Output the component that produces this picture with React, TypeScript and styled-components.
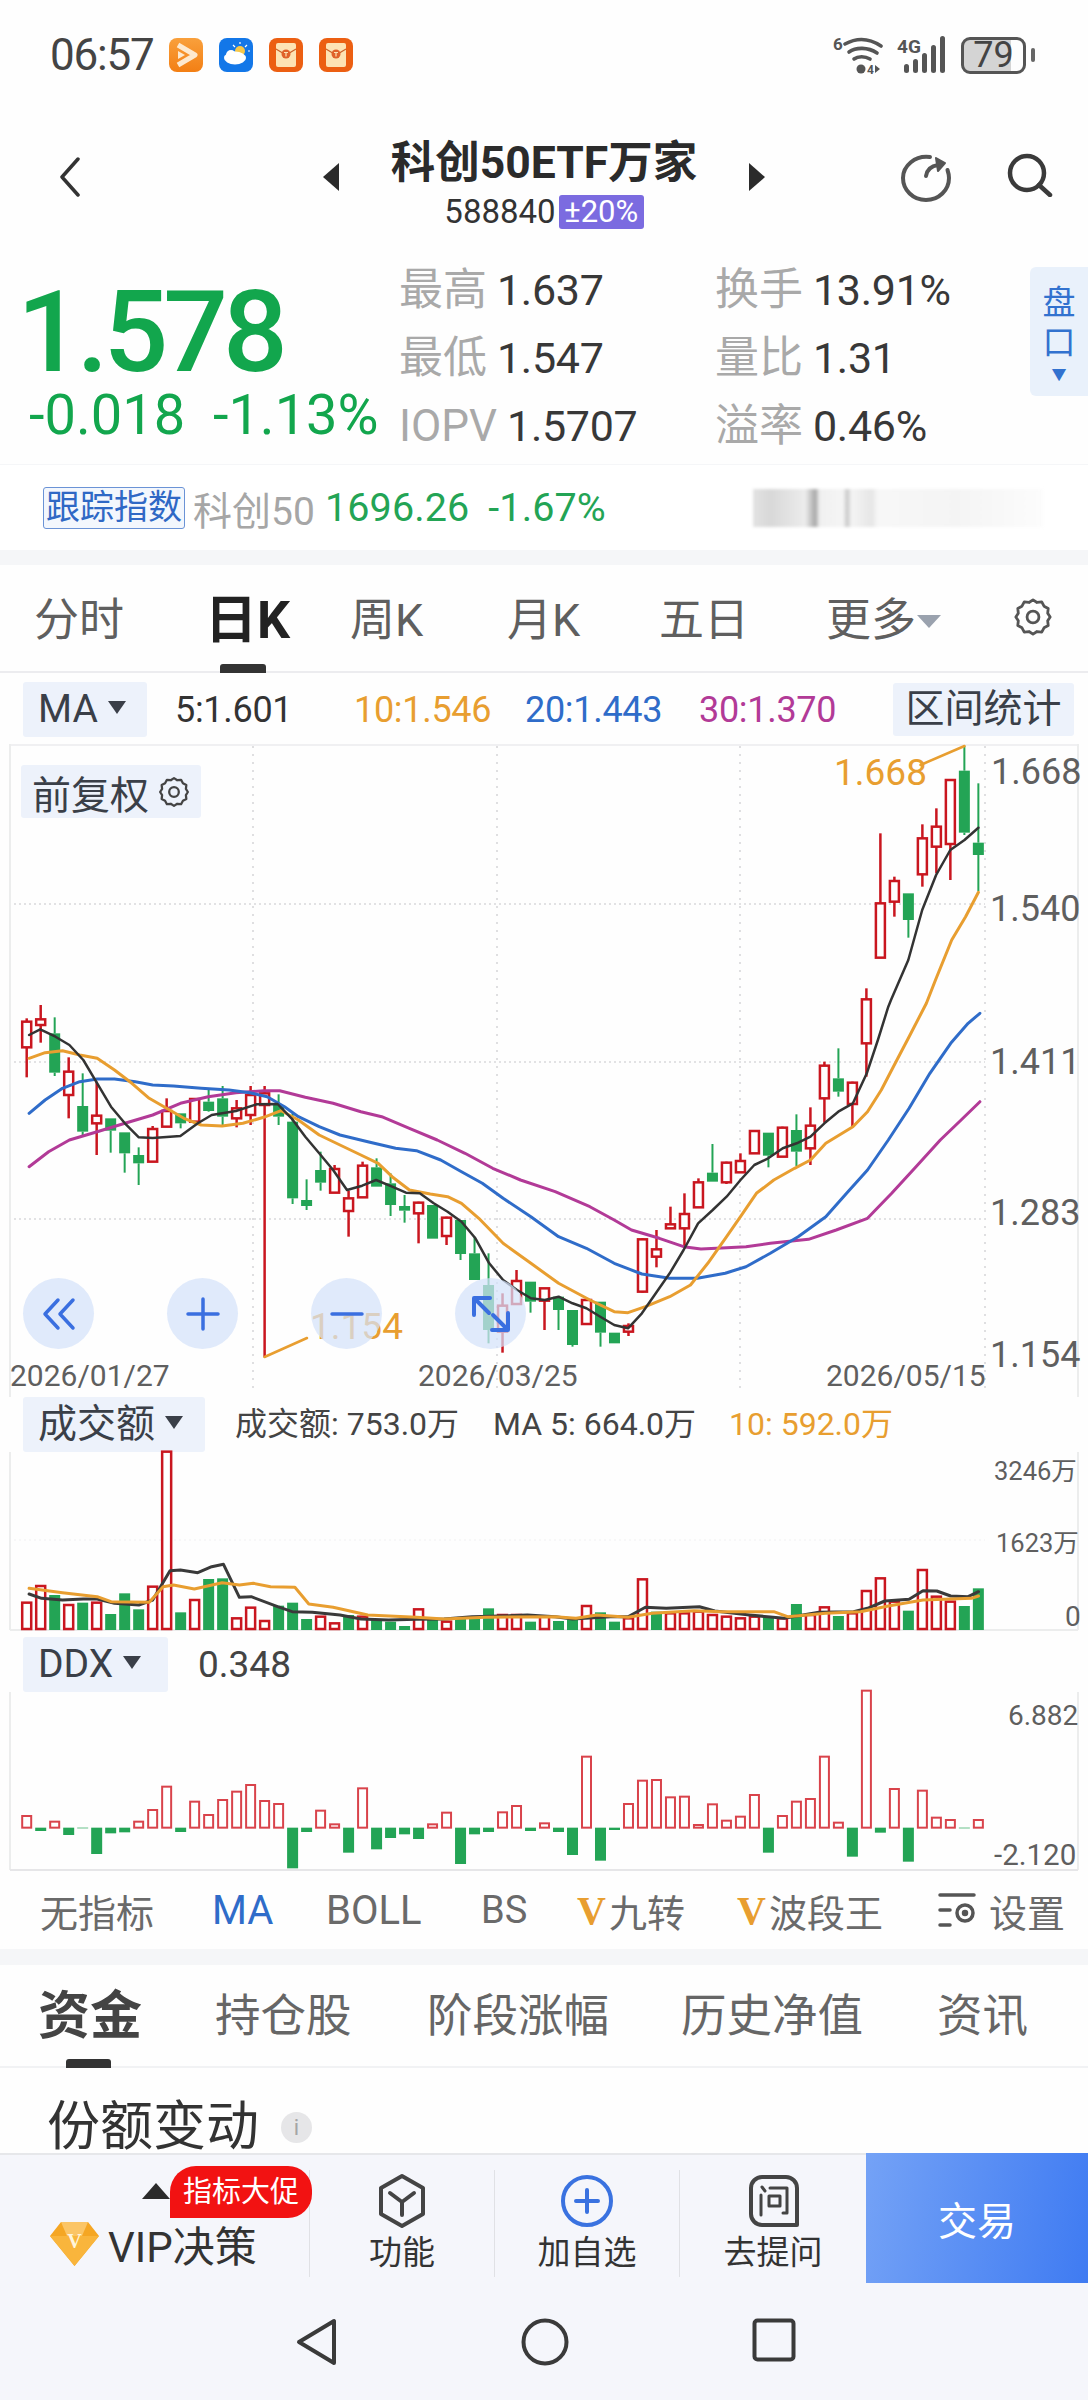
import React from "react";
import styled, { createGlobalStyle } from "styled-components";

const Global = createGlobalStyle`
  html, body { margin: 0; padding: 0; background: #fefefe; }
  * { box-sizing: border-box; }
  body { font-family: Roboto, "Noto Sans CJK SC", sans-serif; }
`;

const RED = "#c9161f";
const GREEN = "#23a455";
const ORANGE = "#e89e30";
const BLUE = "#2f6cc9";
const PURPLE = "#b23a97";
const BLACK = "#333333";

const Page = styled.div`
  width: 1088px;
  height: 2400px;
  overflow: hidden;
  display: flex;
  flex-direction: column;
  background: #fefefe;
  color: #333;
`;

/* status bar */
const StatusBar = styled.div`
  height: 110px;
  display: flex;
  align-items: center;
  padding: 0 62px 0 50px;
`;
const Clock = styled.span`
  font-size: 44px;
  color: #444;
  width: 119px;
  letter-spacing: -1.2px;
`;
const AppIcons = styled.div`
  display: flex;
  gap: 16px;
`;
const SystemIcons = styled.div`
  margin-left: auto;
  display: flex;
  align-items: center;
  gap: 14px;
`;
const Battery = styled.div`
  width: 65px;
  height: 37px;
  border: 3px solid #555;
  border-radius: 9px;
  display: flex;
  align-items: center;
  justify-content: center;
  font-size: 36px;
  color: #444;
  background: linear-gradient(90deg, #d4d4d4 79%, #fdfdfd 79%);
  position: relative;
  &::after {
    content: "";
    position: absolute;
    right: -12px;
    top: 8px;
    width: 4px;
    height: 14px;
    border-radius: 2px;
    background: #666;
  }
`;

/* header */
const Header = styled.div`
  height: 146px;
  display: grid;
  grid-template-columns: 1fr auto 1fr;
  padding-top: 28px;
`;
const HeaderLeft = styled.div`
  padding: 19px 0 0 59px;
`;
const HeaderCenter = styled.div`
  display: flex;
  align-items: flex-start;
  gap: 52px;
`;
const Tri = styled.div<{ $dir: "l" | "r" }>`
  width: 0;
  height: 0;
  margin-top: 25px;
  border-top: 14px solid transparent;
  border-bottom: 14px solid transparent;
  ${(p) => (p.$dir === "l" ? "border-right: 16px solid #2b2b2b;" : "border-left: 16px solid #2b2b2b;")}
`;
const TitleCol = styled.div`
  display: flex;
  flex-direction: column;
  align-items: center;
  gap: 7px;
`;
const Title = styled.div`
  font-size: 44.5px;
  line-height: 50px;
  font-weight: 700;
  color: #2b2b2b;
  white-space: nowrap;
`;
const CodeRow = styled.div`
  display: flex;
  align-items: center;
  gap: 3px;
`;
const Code = styled.span`
  font-size: 33px;
  line-height: 34px;
  color: #333;
`;
const LimitBadge = styled.span`
  width: 85px;
  height: 34px;
  border-radius: 3px;
  background: #7b6be0;
  color: #fff;
  font-size: 31px;
  line-height: 34px;
  text-align: center;
`;
const HeaderRight = styled.div`
  display: flex;
  justify-content: flex-end;
  align-items: flex-start;
  gap: 55px;
  padding: 15px 35px 0 0;
`;

/* quote */
const Quote = styled.div`
  height: 208px;
  display: flex;
  align-items: flex-start;
`;
const PriceCol = styled.div`
  width: 399px;
  padding: 28px 0 0 17px;
`;
const Price = styled.div`
  font-size: 114px;
  line-height: 96px;
  height: 96px;
  font-weight: 500;
  color: #12a64d;
  letter-spacing: -5px;
`;
const Change = styled.div`
  margin-top: 7px;
  padding-left: 12px;
  font-size: 56px;
  line-height: 56px;
  color: #12a64d;
  white-space: pre;
`;
const Stats = styled.div`
  display: grid;
  grid-template-columns: 316px 315px;
  grid-auto-rows: 68px;
  align-items: center;
`;
const Stat = styled.div`
  display: flex;
  align-items: center;
  gap: 10px;
  white-space: nowrap;
`;
const StatLabel = styled.span`
  font-size: 44px;
  line-height: 60px;
  color: #a9a9a9;
`;
const StatValue = styled.span`
  font-size: 43px;
  line-height: 60px;
  color: #383838;
  letter-spacing: -0.3px;
`;
const SidePanel = styled.div`
  margin: 11px 0 0 auto;
  width: 58px;
  height: 129px;
  background: #e9f1fb;
  border-radius: 6px 0 0 6px;
  display: flex;
  flex-direction: column;
  align-items: center;
  padding-top: 16px;
  color: #3272cf;
  font-size: 33px;
  line-height: 40px;
`;
const PanelCaret = styled.span`
  font-size: 15px;
  line-height: 24px;
`;

/* tracking index */
const IndexRow = styled.div`
  height: 86px;
  display: flex;
  align-items: center;
  padding-left: 43px;
  background: #ffffff;
  border-top: 1px solid #f5f6f8;
`;
const IndexTag = styled.span`
  width: 142px;
  height: 42px;
  border: 1.5px solid #6b93d6;
  border-radius: 3px;
  background: #f3f7fd;
  color: #2f68c5;
  font-size: 34px;
  line-height: 39px;
  text-align: center;
  white-space: nowrap;
`;
const IndexName = styled.span`
  margin-left: 8px;
  width: 132px;
  font-size: 39px;
  color: #a6a6a6;
  white-space: nowrap;
`;
const IndexVal = styled.span<{ $gap?: number }>`
  font-size: 39.5px;
  color: #23a455;
  white-space: pre;
  margin-left: ${(p) => p.$gap || 0}px;
  letter-spacing: 0.1px;
`;
const BlurStrip = styled.div`
  margin: 0 45px 0 auto;
  width: 290px;
  height: 38px;
  filter: blur(1.5px);
  background: linear-gradient(
    90deg,
    #e2e2e2 0,
    #d8d8d8 6%,
    #ececec 18%,
    #a8a8a8 21.500%,
    #f0f0f0 23%,
    #f5f5f5 31%,
    #c8c8c8 32.500%,
    #f4f4f4 34%,
    #e6e6e6 41%,
    #f7f7f7 43%,
    #f4f4f4 70%,
    #fcfcfc 100%
  );
`;
const Gap = styled.div<{ $h: number; $plain?: boolean }>`
  height: ${(p) => p.$h}px;
  background: ${(p) => (p.$plain ? "transparent" : "#f5f6f8")};
`;

/* period tabs */
const PeriodTabs = styled.div`
  height: 108px;
  display: grid;
  grid-template-columns: 171px 145px 157px 152px 167px 186px 1fr;
  padding-left: 34px;
  border-bottom: 2px solid #ececef;
  align-items: start;
  padding-top: 31px;
`;
const Period = styled.div<{ $on?: boolean }>`
  font-size: ${(p) => (p.$on ? 52 : 45)}px;
  line-height: 50px;
  font-weight: ${(p) => (p.$on ? 700 : 400)};
  color: ${(p) => (p.$on ? "#222" : "#5f5f5f")};
  display: flex;
  align-items: center;
  position: relative;
`;
const Underline = styled.span<{ $l: number }>`
  position: absolute;
  left: ${(p) => p.$l}px;
  bottom: -27px;
  width: 46px;
  height: 9px;
  border-radius: 3px 3px 0 0;
  background: #333;
`;
const MoreCaret = styled.span`
  margin-left: 1px;
  border-top: 13px solid #9aa2ae;
  border-left: 12px solid transparent;
  border-right: 12px solid transparent;
`;

/* MA row */
const MaRow = styled.div`
  height: 71px;
  padding: 1px 0 0 23px;
  display: grid;
  grid-template-columns: 152px 179px 171px 174px 194px 1fr;
  align-items: center;
`;
const Tag = styled.div<{ $w: number }>`
  width: ${(p) => p.$w}px;
  height: 55px;
  background: #edf2fb;
  border-radius: 3px;
  padding-left: 15px;
  font-size: 39px;
  line-height: 55px;
  color: #3a3f48;
  display: flex;
  align-items: center;
  gap: 10px;
  white-space: nowrap;
`;
const Caret = styled.span`
  border-top: 13px solid #3a3f48;
  border-left: 9px solid transparent;
  border-right: 9px solid transparent;
  margin-top: -4px;
`;
const MaValue = styled.span<{ $c: string }>`
  font-size: 36px;
  padding-top: 2px;
  color: ${(p) => p.$c};
  letter-spacing: -0.3px;
`;
const StatsButton = styled.div`
  width: 181px;
  height: 53px;
  background: #edf2fb;
  border-radius: 3px;
  font-size: 39px;
  line-height: 53px;
  text-align: center;
  color: #3a3f48;
`;

/* charts */
const ChartBox = styled.div<{ $h: number }>`
  position: relative;
  height: ${(p) => p.$h}px;
`;
const ChartSvg = styled.svg`
  display: block;
  width: 1088px;
  height: 100%;
  overflow: visible;
`;
const AxisText = styled.text<{ $s?: number }>`
  font-family: Roboto, "Noto Sans CJK SC", sans-serif;
  font-size: ${(p) => p.$s || 36}px;
  fill: #5f5f5f;
  dominant-baseline: central;
`;
const AnnotText = styled.text`
  font-family: Roboto, sans-serif;
  font-size: 37px;
  fill: ${ORANGE};
  dominant-baseline: central;
`;
const AdjustTag = styled.div`
  position: absolute;
  left: 21px;
  top: 21px;
  width: 180px;
  height: 53px;
  background: #edf2fb;
  border-radius: 3px;
  display: flex;
  align-items: center;
  gap: 8px;
  padding-left: 11px;
  font-size: 39px;
  color: #3a3f48;
`;
const RoundBtn = styled.div<{ $l: number }>`
  position: absolute;
  left: ${(p) => p.$l}px;
  top: 534px;
  width: 71px;
  height: 71px;
  border-radius: 50%;
  background: rgba(212, 226, 250, 0.72);
  display: flex;
  align-items: center;
  justify-content: center;
`;

const SubHeader = styled.div<{ $h: number }>`
  height: ${(p) => p.$h}px;
  display: flex;
  align-items: flex-start;
  padding-left: 23px;
`;
const VolInfo = styled.div`
  margin-left: 30px;
  display: grid;
  grid-template-columns: 258px 236px auto;
`;
const VolText = styled.span<{ $c?: string }>`
  font-size: 32px;
  line-height: 55px;
  color: ${(p) => p.$c || "#444"};
  white-space: nowrap;
`;
const DdxValue = styled.span`
  margin-left: 30px;
  font-size: 37px;
  line-height: 55px;
  color: #444;
`;

/* indicators */
const IndicatorRow = styled.div`
  height: 78px;
  display: grid;
  grid-template-columns: 172px 114px 155px 96px 160px 200px 1fr;
  padding: 0 0 0 40px;
  align-items: center;
`;
const Indicator = styled.div<{ $on?: boolean; $latin?: boolean }>`
  font-size: ${(p) => (p.$latin ? 40 : 38)}px;
  color: ${(p) => (p.$on ? "#2f6cc9" : "#6a6a6a")};
  display: flex;
  align-items: center;
  white-space: nowrap;
`;
const VMark = styled.span`
  font-family: "Liberation Serif", serif;
  font-weight: 700;
  font-style: normal;
  font-size: 40px;
  color: ${ORANGE};
  width: 32px;
`;
const SetIcon = styled.svg`
  margin-right: 12px;
`;

/* info tabs */
const InfoTabs = styled.div`
  height: 103px;
  display: grid;
  grid-template-columns: 177px 212px 254px 256px 1fr;
  padding: 26px 0 0 38px;
  border-bottom: 2px solid #f1f2f4;
`;
const InfoTab = styled.div<{ $on?: boolean }>`
  position: relative;
  height: 52px;
  font-size: ${(p) => (p.$on ? 52 : 45.5)}px;
  line-height: 52px;
  font-weight: ${(p) => (p.$on ? 700 : 400)};
  color: ${(p) => (p.$on ? "#444" : "#666")};
  white-space: nowrap;
`;
const InfoUnderline = styled.span`
  position: absolute;
  left: 28px;
  bottom: -25px;
  width: 45px;
  height: 9px;
  border-radius: 3px 3px 0 0;
  background: #333;
`;
const Section = styled.div`
  height: 85px;
  display: flex;
  align-items: center;
  padding: 33px 0 0 47px;
  gap: 22px;
`;
const SectionTitle = styled.span`
  font-size: 53px;
  line-height: 60px;
  color: #333;
`;
const InfoDot = styled.span`
  width: 31px;
  height: 31px;
  border-radius: 50%;
  background: #e6e6e8;
  color: #a5a5a5;
  font-size: 22px;
  line-height: 31px;
  text-align: center;
`;

/* bottom */
const BottomBar = styled.div`
  height: 130px;
  display: grid;
  grid-template-columns: 310px 185px 185px 186px 222px;
  background: #f5f6fb;
  border-top: 2px solid #e6e7ea;
`;
const VipCell = styled.div`
  position: relative;
  margin-top: 15px;
  height: 107px;
  border-right: 1px solid #e0e1e5;
  padding: 40px 0 0 50px;
  display: flex;
  align-items: center;
  align-self: start;
  gap: 9px;
`;
const VipText = styled.span`
  font-size: 42px;
  color: #333;
  white-space: nowrap;
`;
const PromoBadge = styled.span`
  position: absolute;
  left: 170px;
  top: -4px;
  width: 142px;
  height: 52px;
  background: #f21212;
  color: #fff;
  border-radius: 26px 24px 24px 0;
  font-size: 29px;
  line-height: 52px;
  text-align: center;
  white-space: nowrap;
`;
const PromoArrow = styled.span`
  position: absolute;
  left: 142px;
  top: 13px;
  border-bottom: 16px solid #2b2b2b;
  border-left: 14px solid transparent;
  border-right: 14px solid transparent;
`;
const ActionCell = styled.div<{ $last?: boolean }>`
  margin-top: 15px;
  height: 107px;
  align-self: start;
  border-right: ${(p) => (p.$last ? "none" : "1px solid #e0e1e5")};
  display: flex;
  flex-direction: column;
  align-items: center;
  padding-top: 3px;
`;
const ActionIcon = styled.svg`
  height: 56px;
`;
const ActionText = styled.span`
  margin-top: 4px;
  font-size: 33px;
  line-height: 40px;
  color: #333;
`;
const TradeButton = styled.div`
  background: linear-gradient(100deg, #74a2f6, #3f7bf2);
  color: #fff;
  font-size: 39px;
  display: flex;
  align-items: center;
  justify-content: center;
  margin-top: -2px;
`;
const NavBar = styled.div`
  flex: 1;
  background: #f5f6fb;
  display: flex;
  justify-content: center;
  gap: 183px;
  padding: 35px 0 0 4px;
  align-items: flex-start;
`;

/* ---------- data (page pixel coordinates) ---------- */
type C = [number, number, number, number, "r" | "g"];
const seg1: C[] = [
  [55, 65, 142, 232, "r"], [15, 58, 75, 128, "r"], [52, 100, 218, 228, "g"], [172, 215, 285, 355, "r"],
  [220, 318, 395, 410, "g"], [245, 347, 370, 465, "r"], [355, 355, 392, 458, "g"], [397, 397, 460, 518, "g"],
  [442, 465, 490, 555, "g"], [378, 387, 485, 485, "r"], [295, 333, 380, 380, "r"], [340, 340, 370, 385, "g"],
  [295, 297, 365, 370, "r"], [265, 305, 333, 335, "g"], [258, 295, 350, 380, "g"], [300, 325, 355, 382, "r"],
  [258, 285, 345, 375, "r"], [258, 280, 315, 1072, "r"], [283, 315, 350, 375, "g"], [340, 365, 595, 612, "g"],
  [538, 600, 618, 630, "g"], [455, 510, 548, 572, "g"], [495, 507, 578, 578, "r"], [572, 595, 633, 710, "r"],
  [485, 497, 592, 592, "r"], [475, 502, 560, 560, "g"], [520, 550, 615, 648, "g"], [585, 618, 632, 668, "g"],
  [605, 608, 640, 730, "r"], [615, 615, 716, 716, "g"], [650, 653, 708, 735, "r"], [660, 660, 762, 780, "g"],
  [710, 760, 840, 840, "g"], [760, 855, 990, 1030, "g"], [880, 917, 995, 1058, "r"],
];
const seg2: C[] = [
  [870, 903, 972, 972, "r"], [905, 905, 965, 998, "g"], [925, 925, 962, 1050, "r"], [950, 950, 990, 1050, "g"],
  [990, 990, 1095, 1100, "g"], [955, 960, 1032, 1032, "r"], [965, 965, 1058, 1100, "g"], [1058, 1058, 1090, 1090, "g"],
  [1030, 1038, 1055, 1068, "r"], [775, 778, 935, 938, "r"], [750, 808, 830, 862, "r"], [680, 733, 745, 745, "r"],
  [640, 702, 745, 800, "r"], [595, 607, 682, 682, "r"], [492, 578, 605, 605, "g"], [545, 548, 607, 612, "r"],
  [520, 543, 577, 577, "r"], [450, 453, 520, 520, "r"], [458, 458, 527, 562, "g"], [440, 443, 530, 530, "r"],
  [403, 450, 515, 558, "g"], [382, 437, 505, 555, "r"], [245, 257, 355, 428, "r"], [205, 295, 335, 350, "g"],
  [305, 308, 372, 440, "r"],
];
const seg3: C[] = [
  [775, 808, 940, 1040, "r"], [310, 520, 683, 683, "r"], [440, 453, 515, 560, "r"], [490, 490, 570, 623, "g"],
  [283, 325, 433, 470, "r"], [235, 290, 350, 430, "r"], [148, 150, 342, 450, "r"], [48, 122, 308, 315, "g"],
  [160, 338, 375, 483, "g"],
];
const mapC = (s: C[], base: number): C[] =>
  s.map(([a, b, c, d, k]) => [base + a / 3, base + b / 3, base + c / 3, base + d / 3, k]);
const candles: C[] = [...mapC(seg1, 1000), ...mapC(seg2, 980), ...mapC(seg3, 730)];
const cx = (i: number) => 26.7 + 13.995 * i;

type P = [number, number];
const z3 = (a: P[]) => a.map(([x, y]) => `${(x / 1.441).toFixed(1)},${(980 + y / 3).toFixed(1)}`).join(" ");
const z7 = (a: P[]) => a.map(([x, y]) => `${(544 + x / 2.882).toFixed(1)},${(730 + y / 3).toFixed(1)}`).join(" ");
const z4 = (a: P[]) => a.map(([x, y]) => `${(x / 1.441).toFixed(1)},${(1400 + y / 3).toFixed(1)}`).join(" ");

const ma5 =
  z3([[42,165],[58,148],[80,170],[100,195],[120,240],[140,310],[160,380],[180,430],[200,472],[220,474],[260,468],[285,430],[305,405],[340,393],[370,373],[400,372],[420,415],[440,470],[460,520],[480,570],[500,630],[522,617],[542,600],[565,620],[585,638],[605,640],[625,670],[645,695],[665,725],[685,775],[705,850],[725,900],[745,930],[765,955],[785,960],[805,950],[825,970],[845,985],[865,1010],[885,1035],[905,1045],[925,1000],[945,940],[965,880],[985,810],[1006,730],[1027,690],[1047,650],[1067,600],[1087,555],[1107,535],[1128,505],[1148,490],[1168,470],[1188,430],[1208,395],[1229,370],[1249,280],[1265,180],[1280,80]]) +
  " " +
  z7([[1000,810],[1050,690],[1090,540],[1130,435],[1171,360],[1212,330],[1252,293]]);
const ma10 =
  z3([[42,235],[65,218],[90,212],[115,225],[140,235],[165,270],[190,310],[215,355],[240,385],[265,415],[290,435],[320,438],[350,430],[380,412],[405,392],[430,420],[460,465],[490,495],[520,525],[545,550],[565,590],[590,630],[620,642],[645,650],[665,670],[690,715],[725,790],[765,850],[805,910],[850,960],[885,995],[905,998],[930,980],[965,950],[995,915],[1020,850],[1047,770],[1067,710],[1090,640],[1115,600],[1145,565],[1168,540],[1190,490],[1229,440],[1250,395],[1270,330],[1290,250],[1310,170],[1335,70],[1348,0]]) +
  " " +
  z7([[1175,630],[1215,560],[1252,487]]);
const ma20 = z3([[42,400],[65,360],[90,325],[115,305],[140,297],[165,297],[195,305],[220,315],[250,318],[290,325],[330,330],[360,338],[385,350],[410,380],[430,410],[460,440],[490,465],[530,485],[570,505],[600,512],[635,540],[665,575],[695,610],[725,655],[765,710],[805,770],[845,805],[885,850],[925,882],[965,895],[1005,895],[1045,880],[1075,860],[1110,820],[1150,770],[1190,710],[1220,640],[1250,570],[1280,480],[1310,385],[1340,280],[1370,190],[1395,130],[1412,100]]);
const ma30 = z3([[42,560],[70,515],[100,480],[140,455],[180,430],[220,405],[260,370],[300,350],[340,338],[380,332],[403,332],[440,352],[480,370],[520,395],[550,410],[590,445],[630,480],[670,520],[710,565],[750,600],[800,635],[850,680],[885,720],[910,750],[950,775],[985,800],[1010,807],[1040,804],[1075,800],[1110,790],[1165,778],[1205,750],[1250,715],[1285,640],[1320,560],[1355,480],[1385,420],[1412,365]]);

const volTops: [number, "r" | "g"][] = [
  [608,"r"],[558,"r"],[585,"g"],[615,"r"],[608,"g"],[608,"r"],[642,"g"],[580,"g"],[628,"g"],[560,"r"],[155,"r"],[637,"g"],[600,"r"],[537,"g"],[535,"g"],[655,"r"],[623,"r"],[663,"r"],[617,"g"],[608,"g"],[657,"g"],[650,"r"],[670,"r"],[645,"g"],[650,"r"],[660,"g"],[665,"g"],[678,"g"],[628,"r"],[660,"g"],[665,"r"],[655,"g"],[650,"g"],[625,"g"],[645,"r"],[645,"r"],[665,"g"],[650,"r"],[663,"g"],[658,"g"],[618,"r"],[637,"g"],[665,"g"],[655,"r"],[538,"r"],[635,"g"],[640,"r"],[640,"r"],[635,"r"],[645,"r"],[650,"r"],[655,"r"],[650,"r"],[650,"g"],[655,"r"],[612,"g"],[645,"r"],[622,"r"],[648,"g"],[640,"r"],[573,"r"],[535,"r"],[605,"r"],[632,"g"],[510,"r"],[590,"r"],[605,"r"],[618,"g"],[565,"g"],
];
const volBlack = z4([[42,582],[60,595],[90,600],[120,597],[140,597],[165,610],[200,615],[220,600],[245,512],[260,510],[285,518],[305,500],[322,493],[345,592],[362,590],[400,620],[421,635],[450,637],[490,645],[520,657],[560,660],[600,658],[640,657],[680,650],[720,648],[760,645],[800,650],[825,657],[880,650],[905,650],[930,622],[960,625],[1008,620],[1030,633],[1080,645],[1130,655],[1180,637],[1230,635],[1250,625],[1275,603],[1310,598],[1330,572],[1350,573],[1370,588],[1395,590],[1410,575]]);
const volOrange = z4([[42,565],[90,578],[140,590],[160,605],[215,607],[235,560],[250,555],[280,567],[320,548],[345,555],[365,550],[390,560],[425,562],[445,612],[480,622],[530,645],[600,652],[640,657],[700,652],[800,650],[830,655],[860,645],[905,652],[940,640],[1000,632],[1040,635],[1115,635],[1135,650],[1190,640],[1240,635],[1280,618],[1330,600],[1400,595],[1410,588]]);

const ddx: [number, "r" | "g"][] = [
  [1248,"r"],[1293,"g"],[1265,"r"],[1305,"g"],[1285,"g"],[1362,"g"],[1300,"g"],[1297,"g"],[1265,"r"],[1230,"r"],[1160,"r"],[1296,"g"],[1205,"r"],[1245,"r"],[1200,"r"],[1175,"r"],[1155,"r"],[1203,"r"],[1212,"r"],[1405,"g"],[1296,"g"],[1232,"r"],[1273,"r"],[1358,"g"],[1165,"r"],[1348,"g"],[1314,"g"],[1303,"g"],[1317,"g"],[1273,"r"],[1238,"r"],[1392,"g"],[1303,"g"],[1296,"g"],[1237,"r"],[1218,"r"],[1293,"g"],[1270,"r"],[1296,"g"],[1365,"g"],[1070,"r"],[1382,"g"],[1290,"g"],[1212,"r"],[1142,"r"],[1140,"r"],[1192,"r"],[1190,"r"],[1275,"r"],[1213,"r"],[1262,"r"],[1250,"r"],[1185,"r"],[1358,"g"],[1248,"r"],[1205,"r"],[1197,"r"],[1070,"r"],[1268,"r"],[1370,"g"],[872,"r"],[1298,"g"],[1167,"r"],[1385,"g"],[1172,"r"],[1253,"r"],[1260,"r"],[1285,"g"],[1260,"r"],
];

const BAR_W = 11;

const Candles = () => (
  <g>
    {candles.map(([hi, top, bot, lo, k], i) => {
      const x = cx(i);
      const c = k === "r" ? RED : GREEN;
      const w = k === "r" ? 2.5 : 2;
      return (
        <g key={i}>
          <line x1={x} x2={x} y1={hi} y2={top} stroke={c} strokeWidth={w} />
          <line x1={x} x2={x} y1={bot} y2={lo} stroke={c} strokeWidth={w} />
          {k === "r" ? (
            <rect x={x - 4.5} y={top} width={9} height={Math.max(bot - top, 2)} fill="#fff" stroke={c} strokeWidth={2.5} />
          ) : (
            <rect x={x - BAR_W / 2} y={top} width={BAR_W} height={Math.max(bot - top, 2)} fill={c} />
          )}
        </g>
      );
    })}
  </g>
);

const Line = styled.polyline<{ $c: string; $w?: number }>`
  fill: none;
  stroke: ${(p) => p.$c};
  stroke-width: ${(p) => p.$w || 3}px;
  stroke-linejoin: round;
  stroke-linecap: round;
`;

const FrameLines = ({ y1, y2, bottom }: { y1: number; y2: number; bottom?: string }) => (
  <g stroke="#eceded" strokeWidth={2}>
    <line x1={10} x2={10} y1={y1} y2={y2} />
    <line x1={1078} x2={1078} y1={y1} y2={y2} />
    {bottom && <line x1={10} x2={1078} y1={y2} y2={y2} stroke={bottom} />}
  </g>
);

const MainChart = () => (
  <ChartSvg viewBox="0 744 1088 653">
    <line x1={10} x2={1078} y1={745} y2={745} stroke="#f0f0f2" strokeWidth={2} />
    <FrameLines y1={744} y2={1397} />
    <g stroke="#dfdfe1" strokeWidth={2} strokeDasharray="2 6">
      {[253, 497, 740, 985].map((x) => (
        <line key={x} x1={x} x2={x} y1={746} y2={1392} />
      ))}
    </g>
    <g stroke="#e2e2e4" strokeWidth={2} strokeDasharray="2 3">
      {[904, 1062, 1219].map((y) => (
        <line key={y} x1={14} x2={985} y1={y} y2={y} />
      ))}
    </g>
    <Candles />
    <Line points={ma30} $c={PURPLE} />
    <Line points={ma20} $c={BLUE} />
    <Line points={ma10} $c={ORANGE} />
    <Line points={ma5} $c={BLACK} $w={2.5} />
    <Line points="920.5,765 964.5,746" $c={ORANGE} $w={2.5} />
    <Line points="264.5,1357 307,1338" $c={ORANGE} $w={2.5} />
    <AnnotText x={834} y={772}>1.668</AnnotText>
    <AnnotText x={310} y={1326}>1.154</AnnotText>
    <AxisText x={991} y={772}>1.668</AxisText>
    <AxisText x={990} y={909}>1.540</AxisText>
    <AxisText x={990} y={1062}>1.411</AxisText>
    <AxisText x={990} y={1213}>1.283</AxisText>
    <AxisText x={990} y={1355}>1.154</AxisText>
    <AxisText x={10} y={1375} $s={30}>2026/01/27</AxisText>
    <AxisText x={418} y={1375} $s={30}>2026/03/25</AxisText>
    <AxisText x={826} y={1375} $s={30}>2026/05/15</AxisText>
  </ChartSvg>
);

const VolumeChart = () => (
  <ChartSvg viewBox="0 1452 1088 179">
    <FrameLines y1={1452} y2={1630} bottom="#eceded" />
    <line x1={14} x2={985} y1={1540} y2={1540} stroke="#f0f0f1" strokeWidth={1} strokeDasharray="2 3" />
    {volTops.map(([t, k], i) => {
      const y = 1400 + t / 3;
      const x = cx(i);
      return k === "r" ? (
        <rect key={i} x={x - 4.5} y={y} width={9} height={1629 - y} fill="#fff" stroke={RED} strokeWidth={2.5} />
      ) : (
        <rect key={i} x={x - BAR_W / 2} y={y} width={BAR_W} height={1630 - y} fill={GREEN} />
      );
    })}
    <Line points={volBlack} $c="#3a3a3a" />
    <Line points={volOrange} $c={ORANGE} />
    <AxisText x={994} y={1471} $s={25.5}>3246万</AxisText>
    <AxisText x={996} y={1543} $s={25.5}>1623万</AxisText>
    <AxisText x={1065} y={1616} $s={28}>0</AxisText>
  </ChartSvg>
);

const DdxChart = () => {
  const zero = 1400 + 1283 / 3;
  return (
    <ChartSvg viewBox="0 1692 1088 179">
      <FrameLines y1={1692} y2={1870} bottom="#e6e6e8" />
      {ddx.map(([t, k], i) => {
        const y = 1400 + t / 3;
        const x = cx(i);
        return k === "r" ? (
          <rect key={i} x={x - 4.5} y={y} width={9} height={zero - y} fill="#fff" stroke="#d9434b" strokeWidth={2} />
        ) : (
          <rect key={i} x={x - BAR_W / 2} y={zero} width={BAR_W} height={y - zero} fill={GREEN} />
        );
      })}
      <AxisText x={1008} y={1715} $s={28}>6.882</AxisText>
      <AxisText x={994} y={1855} $s={29.5}>-2.120</AxisText>
    </ChartSvg>
  );
};

const Gear = ({ s = 36, c = "#555" }: { s?: number; c?: string }) => (
  <svg width={s} height={s} viewBox="0 0 24 24" fill="none" stroke={c} strokeWidth={1.6} strokeLinejoin="round">
    <path d="M12 2.2l2.3 1.5 2.7-.3 1.3 2.4 2.4 1.3-.3 2.7L21.8 12l-1.4 2.2.3 2.7-2.4 1.3-1.3 2.4-2.7-.3L12 21.8l-2.3-1.5-2.7.3-1.3-2.4-2.4-1.3.3-2.7L2.2 12l1.4-2.2-.3-2.7 2.4-1.3L7 3.4l2.7.3z" />
    <circle cx="12" cy="12" r="3.4" />
  </svg>
);

const Envelope = () => (
  <svg width="34" height="34" viewBox="0 0 34 34">
    <rect width="34" height="34" rx="8" fill="#ec5f12" />
    <rect x="7" y="5" width="20" height="24" rx="2" fill="#fde3b4" />
    <path d="M7 11l10 6 10-6" fill="none" stroke="#c9602a" strokeWidth="1.2" />
    <circle cx="17" cy="16" r="4.5" fill="#e0622a" />
    <path d="M15 14.5h4M17 14.5v4" stroke="#fde3b4" strokeWidth="1.2" />
  </svg>
);

export default function App() {
  return (
    <Page>
      <Global />
      <StatusBar>
        <Clock>06:57</Clock>
        <AppIcons>
          <svg width="34" height="34" viewBox="0 0 34 34">
            <defs>
              <linearGradient id="og" x1="0" y1="0" x2="0" y2="1">
                <stop offset="0" stopColor="#f9a03c" />
                <stop offset="1" stopColor="#f37f14" />
              </linearGradient>
            </defs>
            <rect width="34" height="34" rx="8" fill="url(#og)" />
            <path d="M9 7l17 10-17 10" fill="none" stroke="#fde9cf" strokeWidth="5" strokeLinejoin="round" />
            <path d="M9 13l7 4-7 4z" fill="#fde9cf" />
          </svg>
          <svg width="34" height="34" viewBox="0 0 34 34">
            <rect width="34" height="34" rx="8" fill="#1377e8" />
            <circle cx="21" cy="13" r="5" fill="#f7c84a" />
            <path d="M21 4v2M28 7l-2 2M14 7l2 2M31 13h-2" stroke="#fff" strokeWidth="1.2" />
            <ellipse cx="16" cy="20" rx="11" ry="6.5" fill="#fff" />
            <circle cx="12" cy="17" r="5" fill="#fff" />
          </svg>
          <Envelope />
          <Envelope />
        </AppIcons>
        <SystemIcons>
          <svg width="50" height="50" viewBox="0 -6 50 50">
            <text x="0" y="14" fontFamily="Roboto" fontSize="17" fontWeight="700" fill="#555">6</text>
            <g fill="none" stroke="#555" strokeWidth="3.6" strokeLinecap="round">
              <path d="M12 8c11-6 24-6 36 2" />
              <path d="M16 16c7-5 19-5 28 1" />
              <path d="M21 23c4-3 11-3 16 0" />
            </g>
            <circle cx="28" cy="33" r="4.500" fill="#555" />
            <text x="34" y="38" fontFamily="Roboto" fontSize="12" fontWeight="700" fill="#555">4</text>
            <path d="M42 29v8l5-4z" fill="#555" />
          </svg>
          <svg width="50" height="50" viewBox="0 -6 50 50">
            <text x="0" y="17" fontFamily="Roboto" fontSize="19" fontWeight="700" fill="#555">4G</text>
            <g fill="#555">
              <rect x="7" y="28" width="5" height="9" rx="2.500" />
              <rect x="16" y="23" width="5" height="14" rx="2.500" />
              <rect x="25" y="17" width="5" height="20" rx="2.500" />
              <rect x="34" y="9" width="5" height="28" rx="2.500" />
              <rect x="43" y="0" width="5" height="37" rx="2.500" />
            </g>
          </svg>
          <Battery>79</Battery>
        </SystemIcons>
      </StatusBar>

      <Header>
        <HeaderLeft>
          <svg width="22" height="40" viewBox="0 0 22 40" fill="none" stroke="#333" strokeWidth="3.5" strokeLinecap="round" strokeLinejoin="round">
            <path d="M19 2L3 20l16 18" />
          </svg>
        </HeaderLeft>
        <HeaderCenter>
          <Tri $dir="l" />
          <TitleCol>
            <Title>科创50ETF万家</Title>
            <CodeRow>
              <Code>588840</Code>
              <LimitBadge>±20%</LimitBadge>
            </CodeRow>
          </TitleCol>
          <Tri $dir="r" />
        </HeaderCenter>
        <HeaderRight>
          <svg width="52" height="50" viewBox="0 0 52 50" fill="none" stroke="#555" strokeWidth="4" strokeLinecap="round" strokeLinejoin="round">
            <path d="M30 4C15 2 3 13 3 25s10 22 23 22 23-10 23-22c0-3-.5-5-1.500-8" />
            <path d="M26 23c1-6 5-10 12-11" />
            <path d="M36 5l9 5-7 8z" fill="#555" strokeWidth="2" />
          </svg>
          <svg width="46" height="44" viewBox="0 0 46 44" fill="none" stroke="#3a3a3a" strokeWidth="4.500" strokeLinecap="round">
            <circle cx="20" cy="20" r="17" />
            <path d="M32 32l11 10" />
          </svg>
        </HeaderRight>
      </Header>

      <Quote>
        <PriceCol>
          <Price>1.578</Price>
          <Change>{"-0.018  -1.13%"}</Change>
        </PriceCol>
        <Stats>
          <Stat><StatLabel>最高</StatLabel><StatValue>1.637</StatValue></Stat>
          <Stat><StatLabel>换手</StatLabel><StatValue>13.91%</StatValue></Stat>
          <Stat><StatLabel>最低</StatLabel><StatValue>1.547</StatValue></Stat>
          <Stat><StatLabel>量比</StatLabel><StatValue>1.31</StatValue></Stat>
          <Stat><StatLabel>IOPV</StatLabel><StatValue>1.5707</StatValue></Stat>
          <Stat><StatLabel>溢率</StatLabel><StatValue>0.46%</StatValue></Stat>
        </Stats>
        <SidePanel>
          <span>盘</span>
          <span>口</span>
          <PanelCaret>▼</PanelCaret>
        </SidePanel>
      </Quote>

      <IndexRow>
        <IndexTag>跟踪指数</IndexTag>
        <IndexName>科创50</IndexName>
        <IndexVal>1696.26</IndexVal>
        <IndexVal $gap={19}>-1.67%</IndexVal>
        <BlurStrip />
      </IndexRow>
      <Gap $h={15} />

      <PeriodTabs>
        <Period>分时</Period>
        <Period $on>日K<Underline $l={15} /></Period>
        <Period>周K</Period>
        <Period>月K</Period>
        <Period>五日</Period>
        <Period>更多<MoreCaret /></Period>
        <Period><Gear s={42} /></Period>
      </PeriodTabs>

      <MaRow>
        <Tag $w={124}>MA<Caret /></Tag>
        <MaValue $c="#333">5:1.601</MaValue>
        <MaValue $c={ORANGE}>10:1.546</MaValue>
        <MaValue $c={BLUE}>20:1.443</MaValue>
        <MaValue $c={PURPLE}>30:1.370</MaValue>
        <StatsButton>区间统计</StatsButton>
      </MaRow>

      <ChartBox $h={653}>
        <MainChart />
        <AdjustTag>前复权<Gear s={34} c="#444" /></AdjustTag>
        <RoundBtn $l={23}>
          <svg width="34" height="34" viewBox="0 0 34 34" fill="none" stroke="#3a6fe0" strokeWidth="3.5" strokeLinecap="round" strokeLinejoin="round">
            <path d="M16 3L3 17l13 14M31 3L18 17l13 14" />
          </svg>
        </RoundBtn>
        <RoundBtn $l={167}>
          <svg width="34" height="34" viewBox="0 0 34 34" stroke="#3a6fe0" strokeWidth="3.5" strokeLinecap="round">
            <path d="M17 2v30M2 17h30" />
          </svg>
        </RoundBtn>
        <RoundBtn $l={311}>
          <svg width="34" height="34" viewBox="0 0 34 34" stroke="#3a6fe0" strokeWidth="3.5" strokeLinecap="round">
            <path d="M2 17h30" />
          </svg>
        </RoundBtn>
        <RoundBtn $l={455}>
          <svg width="38" height="38" viewBox="0 0 38 38" fill="none" stroke="#3a6fe0" strokeWidth="4" strokeLinecap="round" strokeLinejoin="round">
            <path d="M2 20V3h16M3 4l14 14M36 18v17H20M35 34L21 20" />
          </svg>
        </RoundBtn>
      </ChartBox>

      <SubHeader $h={55}>
        <Tag $w={182}>成交额<Caret /></Tag>
        <VolInfo>
          <VolText>成交额: 753.0万</VolText>
          <VolText>MA 5: 664.0万</VolText>
          <VolText $c={ORANGE}>10: 592.0万</VolText>
        </VolInfo>
      </SubHeader>
      <ChartBox $h={179}>
        <VolumeChart />
      </ChartBox>
      <Gap $h={6} $plain />
      <SubHeader $h={55}>
        <Tag $w={145}>DDX<Caret /></Tag>
        <DdxValue>0.348</DdxValue>
      </SubHeader>
      <ChartBox $h={179}>
        <DdxChart />
      </ChartBox>

      <IndicatorRow>
        <Indicator>无指标</Indicator>
        <Indicator $on $latin>MA</Indicator>
        <Indicator $latin>BOLL</Indicator>
        <Indicator>BS</Indicator>
        <Indicator><VMark>V</VMark>九转</Indicator>
        <Indicator><VMark>V</VMark>波段王</Indicator>
        <Indicator>
          <SetIcon width="40" height="36" viewBox="0 0 40 36" fill="none" stroke="#555" strokeWidth="3.5" strokeLinecap="round">
            <path d="M3 3h34M3 18h10M3 33h10" />
            <circle cx="28" cy="21" r="8" />
            <circle cx="28" cy="21" r="1.500" fill="#555" />
          </SetIcon>
          设置
        </Indicator>
      </IndicatorRow>
      <Gap $h={16} />
      <InfoTabs>
        <InfoTab $on>资金<InfoUnderline /></InfoTab>
        <InfoTab>持仓股</InfoTab>
        <InfoTab>阶段涨幅</InfoTab>
        <InfoTab>历史净值</InfoTab>
        <InfoTab>资讯</InfoTab>
      </InfoTabs>
      <Section>
        <SectionTitle>份额变动</SectionTitle>
        <InfoDot>i</InfoDot>
      </Section>

      <BottomBar>
        <VipCell>
          <PromoArrow />
          <PromoBadge>指标大促</PromoBadge>
          <svg width="49" height="44" viewBox="0 0 49 44">
            <path d="M11 0h27l11 14-24.500 30L0 14z" fill="#f5a623" />
            <path d="M0 14h49L24.500 44z" fill="#f9b53c" />
            <path d="M11 0h27l-6 14H17z" fill="#fbc566" />
            <text x="24.500" y="26" textAnchor="middle" fontFamily="Liberation Serif" fontWeight="700" fontSize="20" fill="#fff5dd">V</text>
          </svg>
          <VipText>VIP决策</VipText>
        </VipCell>
        <ActionCell>
          <ActionIcon width="50" viewBox="0 0 50 56" fill="none" stroke="#444" strokeWidth="4" strokeLinejoin="round" strokeLinecap="round">
            <path d="M25 3l21 12v26L25 53 4 41V15z" />
            <path d="M13 20l12 9 12-9M25 29v13" />
          </ActionIcon>
          <ActionText>功能</ActionText>
        </ActionCell>
        <ActionCell>
          <ActionIcon width="54" viewBox="0 0 54 54" fill="none" stroke="#3a72e0" strokeWidth="4" strokeLinecap="round">
            <circle cx="27" cy="27" r="24" />
            <path d="M27 16v22M16 27h22" />
          </ActionIcon>
          <ActionText>加自选</ActionText>
        </ActionCell>
        <ActionCell $last>
          <ActionIcon width="52" viewBox="0 0 52 54" fill="none" stroke="#444" strokeWidth="4" strokeLinejoin="round" strokeLinecap="round">
            <path d="M15 3h24a11 11 0 0 1 11 11v37H15A11 11 0 0 1 4 40V14A11 11 0 0 1 15 3z" />
            <path d="M15 13l3 4M14 21v20M23 14h17v25l-4 0" strokeWidth="3" />
            <rect x="22" y="22" width="11" height="10" strokeWidth="3" />
          </ActionIcon>
          <ActionText>去提问</ActionText>
        </ActionCell>
        <TradeButton>交易</TradeButton>
      </BottomBar>

      <NavBar>
        <svg width="42" height="48" viewBox="0 0 42 48" fill="none" stroke="#3a3a3a" strokeWidth="4" strokeLinejoin="round">
          <path d="M38 3v42L3 24z" />
        </svg>
        <svg width="48" height="48" viewBox="0 0 48 48" fill="none" stroke="#3a3a3a" strokeWidth="4">
          <circle cx="24" cy="24" r="21.500" />
        </svg>
        <svg width="44" height="44" viewBox="0 0 44 44" fill="none" stroke="#3a3a3a" strokeWidth="4" strokeLinejoin="round">
          <rect x="2.500" y="2.500" width="39" height="39" rx="3" />
        </svg>
      </NavBar>
    </Page>
  );
}
